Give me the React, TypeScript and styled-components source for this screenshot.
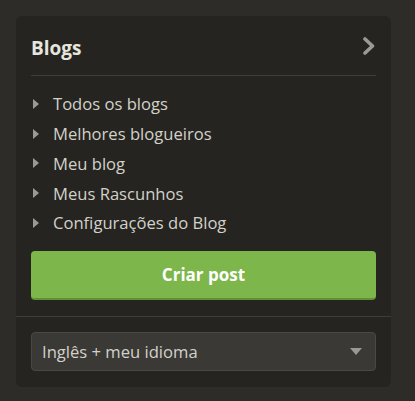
import React from 'react'
import styled, { createGlobalStyle } from 'styled-components'

const Global = createGlobalStyle`
  body {
    margin: 0;
    background: #2e2c28;
    font-family: 'Open Sans', 'Noto Sans', sans-serif;
  }
`

const Page = styled.div`
  padding: 16px;
`

const Card = styled.section`
  width: 375px;
  background: #262420;
  border-radius: 6px;
  padding-bottom: 16px;
`

const Header = styled.div`
  margin: 0 15px;
  height: 59px;
  display: flex;
  align-items: center;
  justify-content: space-between;
  border-bottom: 1px solid #3e3c38;
`

const Title = styled.h2`
  margin: 0;
  padding-top: 4px;
  font-size: 19px;
  font-weight: 700;
  color: #e6e6de;
`

const List = styled.ul`
  list-style: none;
  margin: 0;
  padding: 13px 15px 0;
`

const Item = styled.li`
  display: flex;
  align-items: center;
  height: 29.75px;
  font-size: 16.6px;
  color: #d2d2ca;
  gap: 14px;
  padding-left: 2px;
`

const Button = styled.button`
  display: block;
  margin: 13px 15px 0;
  width: calc(100% - 30px);
  height: 49px;
  border: none;
  border-bottom: 2px solid #5f9135;
  border-radius: 4px;
  background: #7db64b;
  color: #fff;
  font-family: inherit;
  font-size: 17px;
  font-weight: 700;
`

const Divider = styled.hr`
  margin: 16px 0 15px;
  border: none;
  border-top: 1px solid #3e3c38;
`

const Select = styled.div`
  margin: 0 15px;
  height: 39px;
  box-sizing: border-box;
  border: 1px solid #4a4845;
  border-radius: 4px;
  background: #3a3936;
  display: flex;
  align-items: center;
  justify-content: space-between;
  padding: 0 13px 0 10px;
  font-size: 16.6px;
  color: #d2d2ca;
`

const Bullet = () => (
  <svg width="6" height="10" viewBox="0 0 6 10">
    <path d="M0 0 L6 5 L0 10 Z" fill="#9a9994" />
  </svg>
)

const Chevron = () => (
  <svg width="14" height="18" viewBox="0 0 14 18">
    <path d="M3 2 L10.5 9 L3 16" fill="none" stroke="#9a9994" strokeWidth="3.6" strokeLinejoin="round" strokeLinecap="round" />
  </svg>
)

const Caret = () => (
  <svg width="12" height="7" viewBox="0 0 12 7">
    <path d="M0 0 L12 0 L6 7 Z" fill="#9a9994" />
  </svg>
)

const links = ['Todos os blogs', 'Melhores blogueiros', 'Meu blog', 'Meus Rascunhos', 'Configurações do Blog']

export default function App() {
  return (
    <Page>
      <Global />
      <Card>
        <Header>
          <Title>Blogs</Title>
          <Chevron />
        </Header>
        <List>
          {links.map((l) => (
            <Item key={l}>
              <Bullet />
              {l}
            </Item>
          ))}
        </List>
        <Button>Criar post</Button>
        <Divider />
        <Select>
          Inglês + meu idioma
          <Caret />
        </Select>
      </Card>
    </Page>
  )
}
